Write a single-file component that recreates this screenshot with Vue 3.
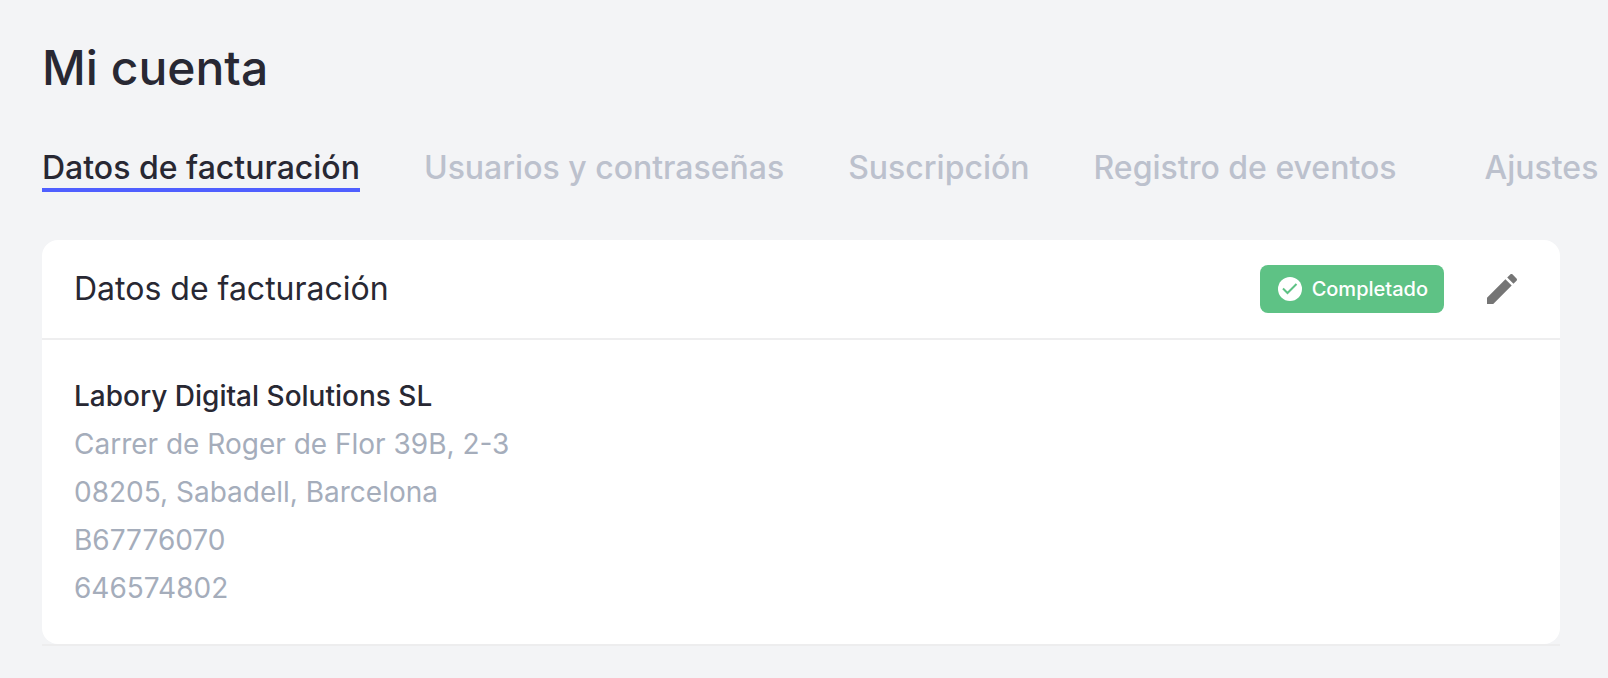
<template>
  <main class="account">
    <h1 class="account-title">Mi cuenta</h1>

    <nav class="tabs">
      <a
        v-for="tab in tabs"
        :key="tab.id"
        :href="`#${tab.id}`"
        class="tab"
        :class="{ active: tab.id === currentTab, last: tab.id === 'ajustes' }"
        @click.prevent="currentTab = tab.id"
      >{{ tab.label }}</a>
    </nav>

    <div class="card-wrapper">
      <section class="card">
        <header class="card-header">
          <h2 class="card-title">Datos de facturación</h2>
          <span class="badge">
            <svg class="badge-icon" viewBox="0 0 24 24" aria-hidden="true">
              <circle cx="12" cy="12" r="12" fill="#fff" />
              <path d="M5 11.5l4.5 4.5L18.500 7" fill="none" stroke="#5ec285" stroke-width="2" />
            </svg>
            Completado
          </span>
          <button class="edit-button" type="button" aria-label="Editar">
            <svg class="edit-icon" viewBox="0 0 24 24" aria-hidden="true">
              <path d="M3 17.25V21h3.75L17.81 9.94l-3.75-3.75L3 17.25zM20.71 7.04c.39-.39.39-1.02 0-1.41l-2.34-2.34c-.39-.39-1.02-.39-1.41 0l-1.83 1.83 3.75 3.75 1.83-1.83z" />
            </svg>
          </button>
        </header>

        <div class="card-body">
          <p class="company">{{ billing.name }}</p>
          <p v-for="line in billing.lines" :key="line" class="line">{{ line }}</p>
        </div>
      </section>
    </div>
  </main>
</template>

<script setup>
import { ref } from 'vue'

const tabs = [
  { id: 'facturacion', label: 'Datos de facturación' },
  { id: 'usuarios', label: 'Usuarios y contraseñas' },
  { id: 'suscripcion', label: 'Suscripción' },
  { id: 'eventos', label: 'Registro de eventos' },
  { id: 'ajustes', label: 'Ajustes' }
]

const currentTab = ref('facturacion')

const billing = {
  name: 'Labory Digital Solutions SL',
  lines: [
    'Carrer de Roger de Flor 39B, 2-3',
    '08205, Sabadell, Barcelona',
    'B67776070',
    '646574802'
  ]
}
</script>

<style>
body {
  background: #f3f4f6;
}
</style>

<style scoped>
.account {
  padding: 36px 48px 32px 42px;
  font-family: Inter, sans-serif;
  color: #282833;
}

.account-title {
  margin: 0;
  font-size: 48px;
  font-weight: 500;
  line-height: 64px;
}

.tabs {
  display: flex;
  gap: 64px;
  margin-top: 48px;
  margin-right: -48px;
  overflow: hidden;
  white-space: nowrap;
}

.tab {
  flex: none;
  border-bottom: 4px solid transparent;
  font-size: 32px;
  font-weight: 500;
  line-height: 40px;
  color: #bcc1cd;
  text-decoration: none;
}

.tab.active {
  color: #282833;
  border-bottom-color: #4f5fff;
}

.tab.last {
  margin-left: 24px;
}

.card-wrapper {
  margin-top: 48px;
  border-bottom: 2px solid #ededee;
}

.card {
  background: #fff;
  border-radius: 16px;
}

.card-header {
  display: flex;
  align-items: center;
  height: 98px;
  padding: 0 38px 0 32px;
  border-bottom: 2px solid #eeeeef;
}

.card-title {
  flex: 1;
  margin: 0;
  font-size: 32px;
  font-weight: 400;
  line-height: 40px;
}

.badge {
  display: flex;
  align-items: center;
  gap: 10px;
  height: 48px;
  padding: 0 16px 0 18px;
  border-radius: 8px;
  background: #5ec285;
  color: #fff;
  font-size: 20px;
  font-weight: 500;
}

.badge-icon {
  width: 24px;
  height: 24px;
}

.edit-button {
  display: flex;
  margin-left: 38px;
  padding: 0;
  border: 0;
  background: none;
  cursor: pointer;
}

.edit-icon {
  width: 40px;
  height: 40px;
  fill: #757575;
}

.card-body {
  padding: 32px;
}

.company,
.line {
  margin: 0;
  font-size: 28px;
  line-height: 48px;
}

.company {
  font-weight: 500;
}

.line {
  color: #a5adbb;
}
</style>
